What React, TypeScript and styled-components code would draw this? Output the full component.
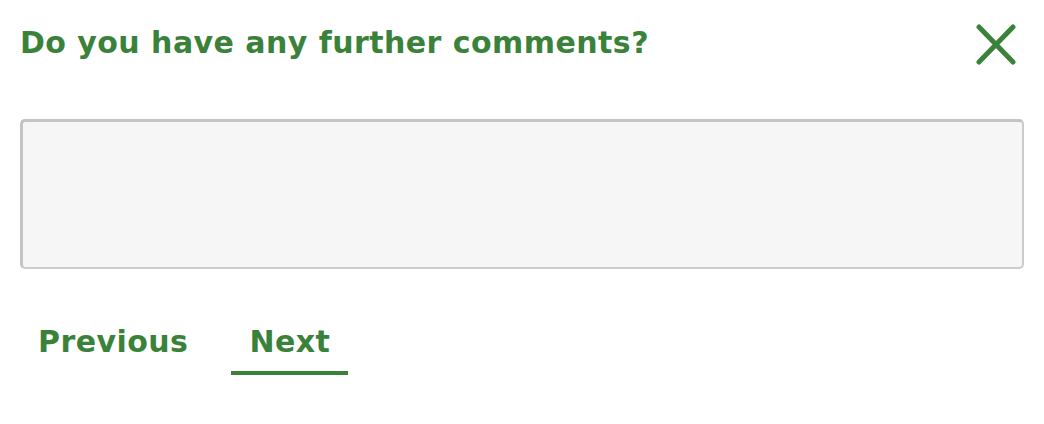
import React, { useState } from "react";
import styled, { createGlobalStyle } from "styled-components";

const GREEN = "#3a823a";

const Global = createGlobalStyle`
  html, body { margin: 0; padding: 0; background: #ffffff; }
  body { font-family: "DejaVu Sans", Verdana, sans-serif; }
  * { box-sizing: border-box; }
`;

const Panel = styled.div`
  width: 1044px;
  padding: 25px 20px 0 20px;
  display: flex;
  flex-direction: column;
`;

const Header = styled.div`
  display: flex;
  align-items: flex-start;
  justify-content: space-between;
`;

const Title = styled.h2`
  margin: 0;
  font-size: 30px;
  font-weight: bold;
  letter-spacing: 0.45px;
  color: ${GREEN};
  line-height: normal;
`;

const CloseButton = styled.button`
  border: none;
  background: none;
  padding: 0;
  margin: -1px 8px 0 0;
  width: 40px;
  height: 41px;
  cursor: pointer;
  display: flex;
`;

const CommentBox = styled.textarea`
  margin-top: 54px;
  width: 1004px;
  height: 150px;
  background: #f6f6f6;
  border: 2px solid #cccccc;
  border-top: 3px solid #c4c4c4;
  border-left: 3px solid #c4c4c4;
  border-radius: 5px;
  resize: none;
  font-family: "DejaVu Sans", sans-serif;
  font-size: 16px;
  outline: none;
`;

const Nav = styled.div`
  display: flex;
  gap: 25px;
  margin-top: 55px;
`;

const NavButton = styled.button<{ $active?: boolean }>`
  border: none;
  background: none;
  padding: 0 18px 12px 18px;
  font-family: "DejaVu Sans", Verdana, sans-serif;
  font-size: 30px;
  font-weight: bold;
  letter-spacing: 0.45px;
  color: ${GREEN};
  line-height: normal;
  border-bottom: 4px solid ${(p) => (p.$active ? GREEN : "transparent")};
  cursor: pointer;
`;

export default function App() {
  const [text, setText] = useState("");
  return (
    <>
      <Global />
      <Panel>
        <Header>
          <Title>Do you have any further comments?</Title>
          <CloseButton aria-label="Close">
            <svg width="40" height="41" viewBox="0 0 40 41">
              <path
                d="M3 3 L37 38 M37 3 L3 38"
                stroke={GREEN}
                strokeWidth="5"
                strokeLinecap="round"
                fill="none"
              />
            </svg>
          </CloseButton>
        </Header>
        <CommentBox value={text} onChange={(e) => setText(e.target.value)} />
        <Nav>
          <NavButton>Previous</NavButton>
          <NavButton $active>Next</NavButton>
        </Nav>
      </Panel>
    </>
  );
}
